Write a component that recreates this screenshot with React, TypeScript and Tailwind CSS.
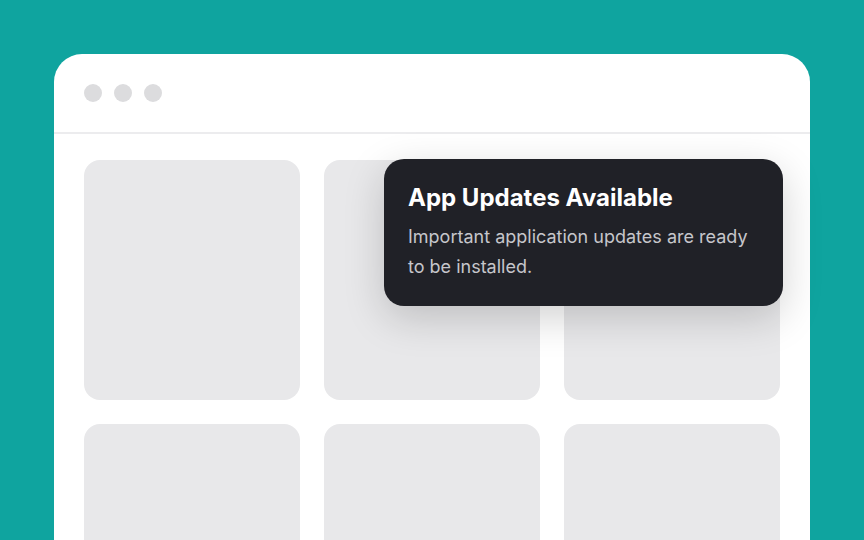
import React from 'react';

const CARD_COUNT = 6;

const App: React.FC = () => {
  return (
    <div className="h-[540px] w-full overflow-hidden bg-[#0fa49f] px-[54px] pt-[54px] font-['Inter',sans-serif]">
      <div className="relative h-[520px] rounded-t-[28px] bg-white">
        <div className="flex gap-3 border-b-2 border-[#ececee] px-[30px] py-[30px]">
          <span className="h-[18px] w-[18px] rounded-full bg-[#dcdcde]" />
          <span className="h-[18px] w-[18px] rounded-full bg-[#dcdcde]" />
          <span className="h-[18px] w-[18px] rounded-full bg-[#dcdcde]" />
        </div>
        <div className="grid grid-cols-3 gap-6 px-[30px] pt-[26px]">
          {Array.from({ length: CARD_COUNT }).map((_, i) => (
            <div key={i} className="h-[240px] rounded-2xl bg-[#e8e8ea]" />
          ))}
        </div>

        {/* update toast */}
        <div className="absolute left-[330px] top-[105px] w-[399px] rounded-[20px] bg-[#202127] px-6 pb-6 pt-6 shadow-[0_12px_40px_rgba(0,0,0,0.18)]">
          <h3 className="text-[24px] font-bold leading-[30px] text-white">App Updates Available</h3>
          <p className="mt-[9px] text-[18px] leading-[30px] text-[#c6c6cb]">
            Important application updates are ready to be installed.
          </p>
        </div>
      </div>
    </div>
  );
};

export default App;
